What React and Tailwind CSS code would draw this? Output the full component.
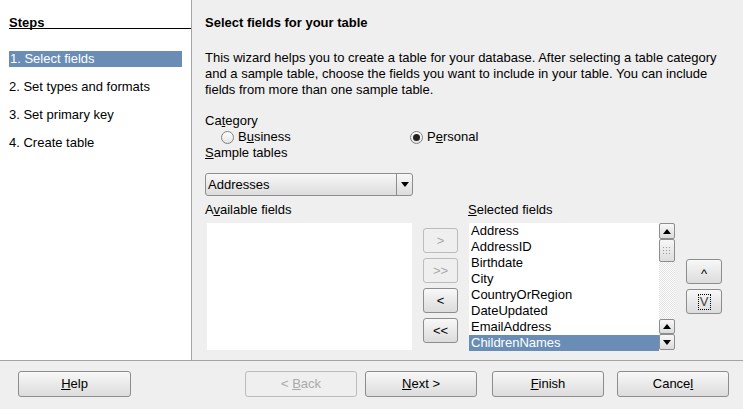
import clsx from "clsx";

const steps = ["1. Select fields", "2. Set types and formats", "3. Set primary key", "4. Create table"];

const fields = [
  "Address",
  "AddressID",
  "Birthdate",
  "City",
  "CountryOrRegion",
  "DateUpdated",
  "EmailAddress",
  "ChildrenNames",
];

function Btn({ children, disabled, className }) {
  return (
    <button
      type="button"
      className={clsx(
        "flex items-center justify-center rounded-[3px] border text-[13px] leading-4",
        disabled
          ? "border-[#bcbcbc] bg-[#efefef] text-[#a9a9a9]"
          : "border-[#8d8d8d] bg-linear-to-b from-[#f8f8f8] to-[#dcdcdc] text-black",
        className,
      )}
    >
      {children}
    </button>
  );
}

function Radio({ checked }) {
  return (
    <span className="flex h-[13px] w-[13px] items-center justify-center rounded-full border border-[#808080] bg-linear-to-b from-white to-[#e4e4e4]">
      {checked && <span className="h-[7px] w-[7px] rounded-full bg-[#222]" />}
    </span>
  );
}

function Arrow({ down }) {
  return (
    <svg width="8" height="5" viewBox="0 0 8 5">
      {down ? <path d="M0 0h8L4 5z" fill="#000" /> : <path d="M0 5h8L4 0z" fill="#000" />}
    </svg>
  );
}

function ScrollBtn({ down, className }) {
  return (
    <div
      className={clsx(
        "flex items-center justify-center rounded-[2px] border border-[#8d8d8d] bg-linear-to-b from-[#f8f8f8] to-[#dcdcdc]",
        className,
      )}
    >
      <Arrow down={down} />
    </div>
  );
}

function Scrollbar() {
  return (
    <div className="flex h-[127px] w-[16px] flex-col">
      <ScrollBtn className="h-[16px]" />
      <div className="flex h-[23px] items-center justify-center rounded-[2px] border border-[#8d8d8d] bg-linear-to-b from-[#f6f6f6] to-[#dedede]">
        <svg width="8" height="8" viewBox="0 0 8 8">
          {[0, 3, 6].map((y) =>
            [0, 3, 6].map((x) => <rect key={`${x}-${y}`} x={x} y={y} width="1" height="1" fill="#9a9a9a" />),
          )}
        </svg>
      </div>
      <div className="flex-1 bg-[#f6f6f6] bg-[image:repeating-conic-gradient(#e2e2e2_0_25%,#ffffff_0_50%)] bg-size-[2px_2px]" />
      <ScrollBtn className="h-[15px]" />
      <ScrollBtn down className="h-[16px]" />
    </div>
  );
}

export default function App() {
  return (
    <div className="flex h-[409px] w-[743px] flex-col overflow-hidden bg-[#efefef] font-['Liberation_Sans',Arial,sans-serif] text-[13px] leading-4 text-black">
      <div className="flex h-[361px] border-b border-[#a4a4a4]">
        <aside className="w-[192px] shrink-0 border-r border-[#a4a4a4] bg-white pl-[9px]">
          <div className="border-b border-black pt-[17px] font-bold leading-[11px]">Steps</div>
          <ul className="mt-[22px] flex w-[173px] flex-col gap-3">
            {steps.map((s, i) => (
              <li key={s} className={clsx("h-4", i === 0 && "bg-[#698db5] pl-px text-white")}>
                {s}
              </li>
            ))}
          </ul>
        </aside>

        <main className="flex-1 pl-[13px] pt-[15px]">
          <h2 className="font-bold">Select fields for your table</h2>
          <p className="mt-[19px] w-[528px]">
            This wizard helps you to create a table for your database. After selecting a table category and a
            sample table, choose the fields you want to include in your table. You can include fields from more
            than one sample table.
          </p>

          <div className="mt-[15px]">
            Ca<u>t</u>egory
          </div>
          <div className="flex h-4 items-center pl-[16px]">
            <label className="flex w-[189px] items-center gap-1">
              <Radio />
              <span>
                B<u>u</u>siness
              </span>
            </label>
            <label className="flex items-center gap-1">
              <Radio checked />
              <span>
                P<u>e</u>rsonal
              </span>
            </label>
          </div>

          <div>
            <u>S</u>ample tables
          </div>
          <div className="mt-[12px] flex h-[23px] w-[208px] rounded-[3px] border border-[#8d8d8d] bg-linear-to-b from-[#f8f8f8] to-[#dcdcdc]">
            <span className="flex flex-1 items-center pl-[2px]">Addresses</span>
            <span className="flex w-[16px] items-center justify-center border-l border-[#8d8d8d]">
              <Arrow down />
            </span>
          </div>

          <div className="mt-[6px] flex">
            <div className="w-[207px]">
              <div>
                A<u>v</u>ailable fields
              </div>
              <div className="ml-[2px] mt-[5px] h-[127px] w-[205px] bg-white" />
            </div>

            <div className="ml-[11px] flex w-[35px] flex-col gap-[5px] pt-[26px]">
              <Btn disabled className="h-[25px]">&gt;</Btn>
              <Btn disabled className="h-[25px]">&gt;&gt;</Btn>
              <Btn className="h-[25px]">&lt;</Btn>
              <Btn className="h-[25px]">&lt;&lt;</Btn>
            </div>

            <div className="ml-[10px] w-[207px]">
              <div>
                <u>S</u>elected fields
              </div>
              <div className="ml-px mt-[5px] flex h-[127px]">
                <ul className="w-[190px] bg-white">
                  {fields.map((f, i) => (
                    <li
                      key={f}
                      className={clsx("h-4 pl-[2px]", i === fields.length - 1 && "bg-[#698db5] text-white")}
                    >
                      {f}
                    </li>
                  ))}
                </ul>
                <Scrollbar />
              </div>
            </div>

            <div className="ml-[11px] flex w-[36px] flex-col gap-[5px] pt-[57px]">
              <Btn className="h-[25px] text-[#444]">
                <span className="translate-y-[2px]">^</span>
              </Btn>
              <Btn className="h-[25px]">
                <span className="flex h-[16px] w-[13px] items-center justify-center border border-dotted border-black text-[#444]">
                  V
                </span>
              </Btn>
            </div>
          </div>
        </main>
      </div>

      <footer className="flex items-start pl-[18px] pt-[10px]">
        <Btn className="h-[26px] w-[113px]">
          <span>
            <u>H</u>elp
          </span>
        </Btn>
        <Btn disabled className="ml-[114px] h-[26px] w-[112px]">
          <span>
            &lt; <u>B</u>ack
          </span>
        </Btn>
        <Btn className="ml-[8px] h-[26px] w-[112px]">
          <span>
            <u>N</u>ext &gt;
          </span>
        </Btn>
        <Btn className="ml-[15px] h-[26px] w-[112px]">
          <span>
            <u>F</u>inish
          </span>
        </Btn>
        <Btn className="ml-[13px] h-[26px] w-[112px]">
          <span>
            Cance<u>l</u>
          </span>
        </Btn>
      </footer>
    </div>
  );
}
